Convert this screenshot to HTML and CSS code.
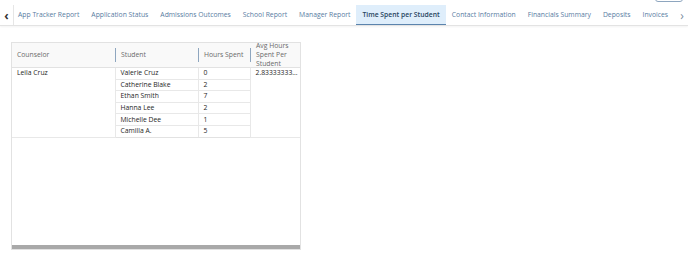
FILE: index.html
```html
<!DOCTYPE html>
<html lang="en">
<head>
  <meta charset="UTF-8">
  <title>Time Spent per Student</title>
  <link rel="stylesheet" href="styles.css">
</head>
<body>

<div class="topbox"></div>

<div class="tabbar">
  <div class="arrow left">&#8249;</div>
  <div class="tabs">
    <div class="tab">App Tracker Report</div>
    <div class="tab">Application Status</div>
    <div class="tab">Admissions Outcomes</div>
    <div class="tab">School Report</div>
    <div class="tab">Manager Report</div>
    <div class="tab active">Time Spent per Student</div>
    <div class="tab">Contact Information</div>
    <div class="tab">Financials Summary</div>
    <div class="tab">Deposits</div>
    <div class="tab">Invoices</div>
  </div>
  <div class="arrow right">&#8250;</div>
</div>

<div class="grid">
  <table>
    <colgroup>
      <col class="c1"><col class="c2"><col class="c3"><col class="c4">
    </colgroup>
    <thead>
      <tr>
        <th><div class="hd"><span>Counselor</span></div></th>
        <th><div class="hd"><i></i><span>Student</span></div></th>
        <th><div class="hd"><i></i><span>Hours Spent</span></div></th>
        <th><div class="hd"><i></i><span>Avg Hours Spent Per Student</span></div></th>
      </tr>
    </thead>
    <tbody>
      <tr>
        <td rowspan="6" class="span">Leila Cruz</td>
        <td>Valerie Cruz</td>
        <td>0</td>
        <td rowspan="6" class="span">2.83333333...</td>
      </tr>
      <tr><td>Catherine Blake</td><td>2</td></tr>
      <tr><td>Ethan Smith</td><td>7</td></tr>
      <tr><td>Hanna Lee</td><td>2</td></tr>
      <tr><td>Michelle Dee</td><td>1</td></tr>
      <tr class="last"><td>Camilla A.</td><td>5</td></tr>
    </tbody>
  </table>
  <div class="empty"></div>
  <div class="scroll"></div>
</div>

</body>
</html>
```

FILE: styles.css
```css
body {
  margin: 0;
  font-family: "Open Sans", sans-serif;
  background: #fff;
  width: 688px;
  height: 258px;
  overflow: hidden;
  position: relative;
}

.topbox {
  position: absolute;
  top: -10px;
  left: 655px;
  width: 26px;
  height: 10px;
  border: 1px solid #8ea6bf;
  border-radius: 3px;
}

.tabbar {
  display: flex;
  align-items: stretch;
  height: 20px;
  margin-top: 5px;
  border-bottom: 1px solid #e3e3e3;
  box-shadow: 0 1px 2px rgba(0,0,0,0.05);
}

.arrow {
  width: 13px;
  flex: none;
  display: flex;
  align-items: center;
  justify-content: center;
  font-size: 12px;
  color: #333;
}

.arrow.left {
  border-right: 1px solid #e6e6e6;
  font-weight: bold;
}

.arrow.right {
  margin-left: auto;
  color: #7d8ea0;
  width: 12px;
}

.tabs {
  display: flex;
  overflow: hidden;
}

.tab {
  font-size: 6.8px;
  color: #587c9f;
  padding: 0 6px;
  display: flex;
  align-items: center;
  white-space: nowrap;
  border-bottom: 2px solid transparent;
  margin-bottom: -1px;
}

.tab:first-child {
  padding-left: 4px;
}

.tab.active {
  background: #dfeefb;
  color: #28445f;
  font-weight: 600;
  border-bottom-color: #5b84ad;
}

.grid {
  margin: 16px 0 0 11px;
  width: 288px;
  height: 206px;
  border: 1px solid #e2e2e2;
  display: flex;
  flex-direction: column;
}

table {
  border-collapse: collapse;
  table-layout: fixed;
  width: 288px;
  font-size: 6.8px;
}

col.c1 { width: 103px; }
col.c2 { width: 83px; }
col.c3 { width: 52px; }
col.c4 { width: 50px; }

th {
  height: 24px;
  background: #f9f9f9;
  color: #6b6b6b;
  font-weight: normal;
  text-align: left;
  padding: 0;
  border-bottom: 1px solid #e2e2e2;
}

.hd {
  display: flex;
  align-items: center;
  height: 24px;
}

.hd i {
  flex: none;
  width: 1px;
  height: 14px;
  background: #8ea6bf;
}

.hd span {
  padding: 0 4px 1px 5px;
  line-height: 9px;
}

td {
  height: 10.6px;
  line-height: 10px;
  padding: 0 5px;
  color: #1e1e1e;
  border: 1px solid #e8e8e8;
  white-space: nowrap;
  overflow: hidden;
}

td.span {
  vertical-align: top;
  border-top: none;
}

td:first-child {
  border-left: none;
}

tr.last td {
  border-bottom: 1px solid #e2e2e2;
}

td:last-child {
  border-right: none;
}

.empty {
  flex: 1;
}

.scroll {
  height: 4px;
  background: #a9a9a9;
}
```
